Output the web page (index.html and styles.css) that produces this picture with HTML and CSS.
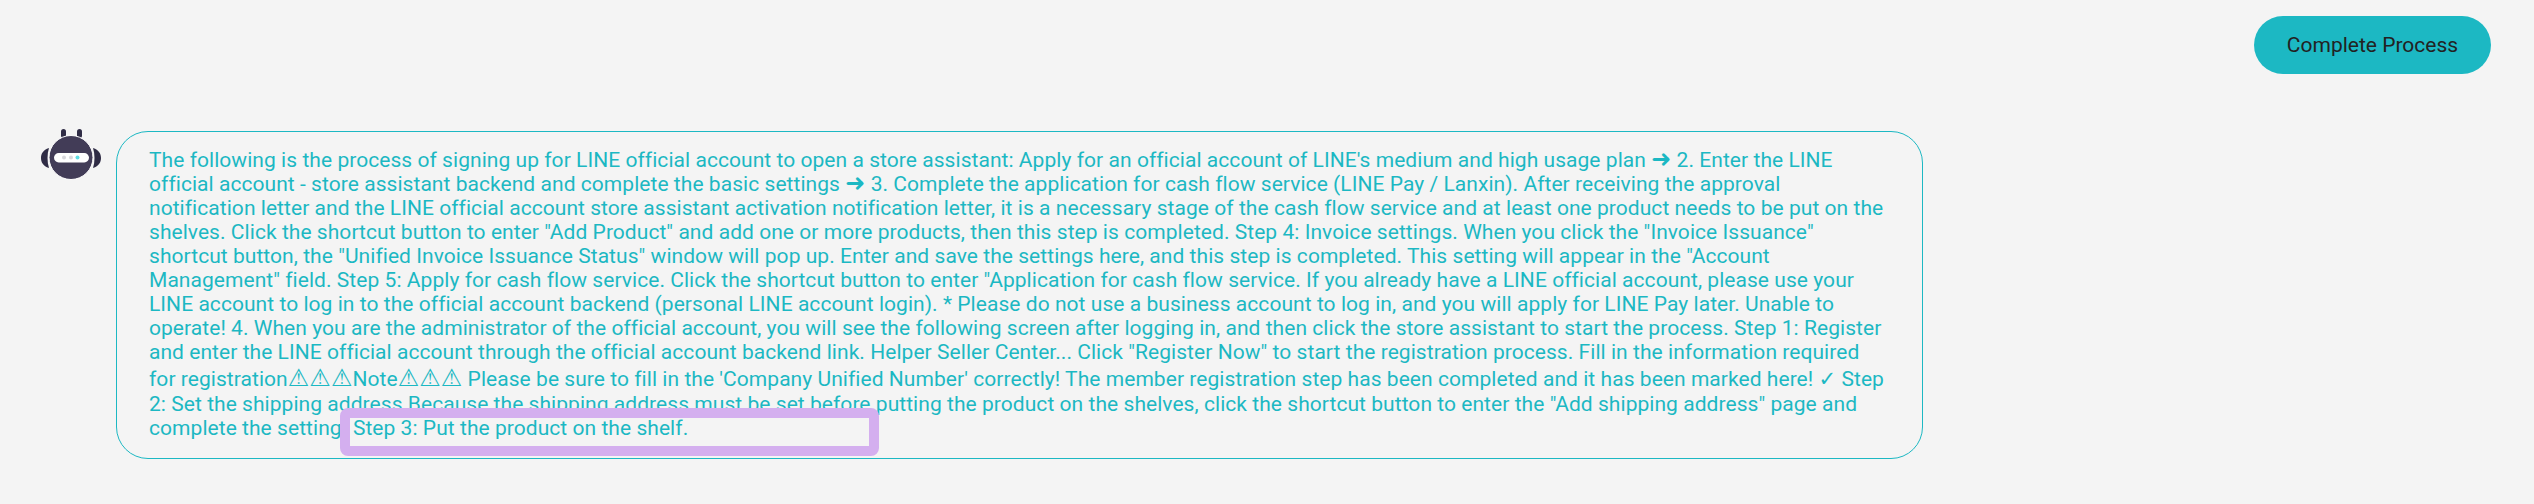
FILE: index.html
```html
<!DOCTYPE html>
<html lang="en">

<head>
    <meta charset="UTF-8">
    <meta name="viewport" content="width=device-width, initial-scale=1.0">
    <title>Complete Process</title>
    <link rel="stylesheet" href="styles.css">
</head>

<body>
    <div class="top-bar">
        <button class="complete-btn" type="button">Complete Process</button>
    </div>
    <div class="chat-row">
        <svg class="bot-icon" width="60" height="52" viewBox="0 0 60 52">
            <path d="M8 19 C2 21 0 25 0 29 C0 33 2 37 8 39 C6 33 6 25 8 19Z" fill="#2f2c45"/>
            <path d="M52 19 C58 21 60 25 60 29 C60 33 58 37 52 39 C54 33 54 25 52 19Z" fill="#2f2c45"/>
            <rect x="20" y="0" width="5" height="9" rx="2.500" fill="#2f2c45"/>
            <rect x="36" y="0" width="5" height="9" rx="2.500" fill="#2f2c45"/>
            <circle cx="30" cy="28.500" r="22" fill="#423c57" stroke="#fff" stroke-width="1"/>
            <rect x="13" y="24" width="35" height="9.500" rx="4.700" fill="#fff"/>
            <circle cx="23" cy="28.500" r="2" fill="#d8d8dc"/>
            <circle cx="30" cy="28.500" r="2" fill="#d8d8dc"/>
            <circle cx="36.500" cy="28.500" r="2" fill="#5fdde4"/>
        </svg>
        <div class="bubble">
            <p class="bubble-text">The following is the process of signing up for LINE official account to open a store assistant: Apply for an official account of LINE's medium and high usage plan <span class="arrow">➜</span> 2. Enter the LINE official account - store assistant backend and complete the basic settings <span class="arrow">➜</span> 3. Complete the application for cash flow service (LINE Pay / Lanxin). After receiving the approval notification letter and the LINE official account store assistant activation notification letter, it is a necessary stage of the cash flow service and at least one product needs to be put on the shelves. Click the shortcut button to enter "Add Product" and add one or more products, then this step is completed. Step 4: Invoice settings. When you click the "Invoice Issuance" shortcut button, the "Unified Invoice Issuance Status" window will pop up. Enter and save the settings here, and this step is completed. This setting will appear in the "Account Management" field. Step 5: Apply for cash flow service. Click the shortcut button to enter "Application for cash flow service. If you already have a LINE official account, please use your LINE account to log in to the official account backend (personal LINE account login). * Please do not use a business account to log in, and you will apply for LINE Pay later. Unable to operate! 4. When you are the administrator of the official account, you will see the following screen after logging in, and then click the store assistant to start the process. Step 1: Register and enter the LINE official account through the official account backend link. Helper Seller Center... Click "Register Now" to start the registration process. Fill in the information required for registration<span class="warn">⚠⚠⚠</span>Note<span class="warn">⚠⚠⚠</span> Please be sure to fill in the 'Company Unified Number' correctly! The member registration step has been completed and it has been marked here! <span class="check">✓</span> Step 2: Set the shipping address Because the shipping address must be set before putting the product on the shelves, click the shortcut button to enter the "Add shipping address" page and complete the setting <span class="step-mark">Step 3: Put the product on the shelf.</span></p>
        </div>
    </div>
</body>

</html>
```

FILE: styles.css
```css
body {
    font-family: 'Roboto', 'DejaVu Sans', sans-serif;
    background-color: #f4f4f4;
    margin: 0;
}

.top-bar {
    display: flex;
    justify-content: flex-end;
    padding: 16px 43px 0 0;
}

.complete-btn {
    width: 237px;
    height: 58px;
    border: none;
    border-radius: 29px;
    background-color: #1cb8c3;
    color: #222;
    font-family: 'Roboto', sans-serif;
    font-size: 21px;
}

.chat-row {
    display: flex;
    align-items: flex-start;
    gap: 15px;
    padding: 55px 0 0 41px;
}

.bubble {
    box-sizing: border-box;
    width: 1807px;
    height: 328px;
    margin-top: 2px;
    padding: 16px 36px 16px 32px;
    border: 1px solid #1cb8c3;
    border-radius: 32px;
}

.bubble-text {
    margin: 0;
    color: #1cb8c3;
    font-size: 21px;
    letter-spacing: 0.05px;
}

.arrow {
    font-size: 24px;
    line-height: 0;
}

.check {
    line-height: 0;
}

.warn {
    font-size: 24px;
    line-height: 28px;
}

.step-mark {
    position: relative;
    margin-left: 6px;
}

.step-mark::after {
    content: "";
    position: absolute;
    top: -8px;
    left: -13px;
    width: 539px;
    height: 48px;
    box-sizing: border-box;
    border: 10px solid #d4afef;
    border-radius: 8px;
}
```
